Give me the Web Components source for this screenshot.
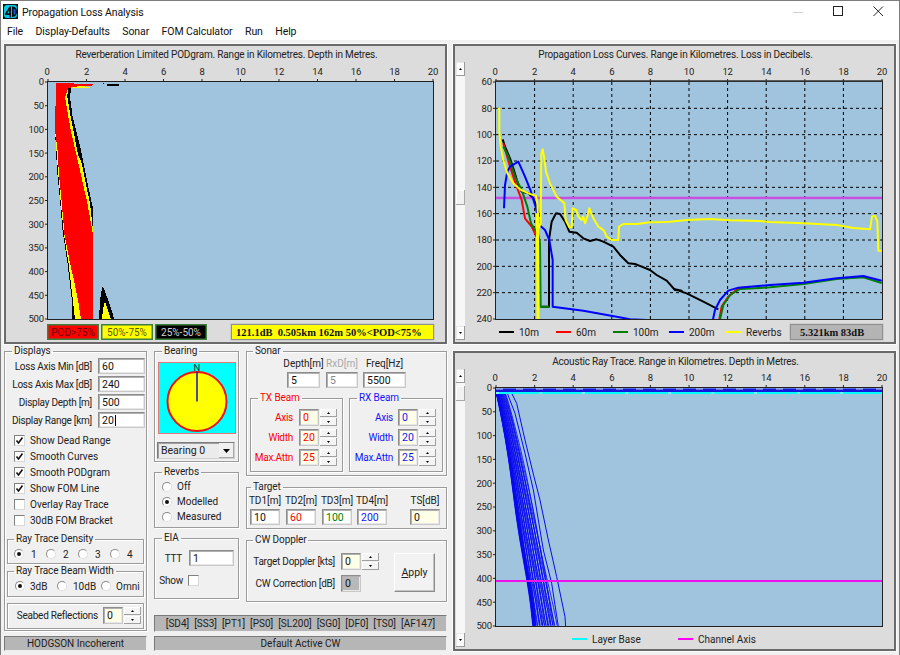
<!DOCTYPE html>
<html lang="en">
<head>
<meta charset="utf-8">
<title>Propagation Loss Analysis</title>
<style>
html,body{margin:0;padding:0;background:#f0f0f0;}
</style>
</head>
<body>
<win-app>
  <plot-panel kind="pod" heading="Reverberation Limited PODgram. Range in Kilometres. Depth in Metres.">
    <pod-key slot="legend" bg="#ff0000" fg="#6a0000">POD&gt;75%</pod-key>
    <pod-key slot="legend" bg="#ffff00" fg="#5a5a00">50%-75%</pod-key>
    <pod-key slot="legend" bg="#000000" fg="#d0d0d0">25%-50%</pod-key>
    <info-box slot="legend" class="end" bg="#ffff00" w="203" pl="4">121.1dB  0.505km 162m 50%&lt;POD&lt;75%</info-box>
  </plot-panel>
  <plot-panel kind="loss" scroll="114" heading="Propagation Loss Curves. Range in Kilometres. Loss in Decibels.">
    <line-key slot="legend" color="#000000" w="57">10m</line-key>
    <line-key slot="legend" color="#ff0000" w="57">60m</line-key>
    <line-key slot="legend" color="#008000" w="56">100m</line-key>
    <line-key slot="legend" color="#0000ff" w="57">200m</line-key>
    <line-key slot="legend" color="#ffff00" w="57">Reverbs</line-key>
    <info-box slot="legend" class="end" bg="#b4b4b4" w="93" pl="9">5.321km 83dB</info-box>
  </plot-panel>
  <control-deck></control-deck>
  <plot-panel kind="ray" scroll="3" heading="Acoustic Ray Trace. Range in Kilometres. Depth in Metres.">
    <line-key slot="legend" color="#00ffff" w="211" lead="105">Layer Base</line-key>
    <line-key slot="legend" color="#ff00ff" w="100">Channel Axis</line-key>
  </plot-panel>
</win-app>

<script>
const UI = 'Roboto,"Liberation Sans",Arial,sans-serif';
const def = (n, c) => customElements.define(n, c);
const attr = (el, n, d = '') => el.hasAttribute(n) ? el.getAttribute(n) : d;
class Base extends HTMLElement {
  constructor(){ super(); this.attachShadow({mode:'open'}); }
  connectedCallback(){ if(!this._r){ this._r = 1; this.shadowRoot.innerHTML = this.render(); } }
}

/* ---------- window shell ---------- */
def('win-app', class extends Base { render(){ return `
<style>
:host{display:flex;flex-direction:column;box-sizing:border-box;width:900px;height:655px;overflow:hidden;
  border:1px solid #7d7d7d;border-bottom:0;background:#f0f0f0;color:#1a1a1a;font:10px ${UI};}
.title{display:flex;align-items:center;height:21px;background:#fff;flex:none;padding-left:2px;}
.title svg.ic{margin-right:4px;flex:none}
.name{font:10.500px Roboto,sans-serif;letter-spacing:-.1px;color:#111;position:relative;top:1px}
.btns{margin-left:auto;display:flex;padding-right:1px}
.btns span{display:flex;width:40px;height:21px;align-items:center;justify-content:center}
.menu{display:flex;height:18px;background:#fff;flex:none;align-items:center;gap:12.500px;padding-left:6px;
  font:10.500px Roboto,sans-serif;letter-spacing:-.1px;color:#111;}
main{flex:1;display:grid;grid-template-columns:443px 443px;grid-template-rows:300px 300px;column-gap:6px;row-gap:7px;padding:4px 0 0 3px;}
</style>
<div class="title">
  <svg class="ic" width="15" height="15" viewBox="0 0 15 15"><rect width="15" height="15" fill="#06121c"/><rect x="1" y="1" width="13" height="13" rx="3" fill="#08c8e0"/><path d="M6.500 2.500 2 9.500v1.500h4.500v2.500h1.500V2.500z" fill="#06121c"/><path d="M4.300 9.300 6 6.500v2.800z" fill="#08c8e0"/><path d="M9 2.500c4 0 5 2.500 5 5s-1 5.500-5 5.500z" fill="#06121c"/><rect x="10.500" y="5" width="2" height="5.500" rx="1" fill="#1d4fd0"/></svg>
  <span class="name">Propagation Loss Analysis</span>
  <div class="btns">
    <span><svg width="10" height="10"><path d="M0 5.500h10" stroke="#cfcfcf"/></svg></span>
    <span><svg width="11" height="11"><rect x=".5" y=".5" width="9" height="9" fill="none" stroke="#222"/></svg></span>
    <span><svg width="11" height="11"><path d="M.5.500l9.500 9.500M10 .5.500 10" stroke="#222" fill="none"/></svg></span>
  </div>
</div>
<nav class="menu"><span>File</span><span>Display-Defaults</span><span>Sonar</span><span>FOM Calculator</span><span>Run</span><span>Help</span></nav>
<main><slot></slot></main>`; }});

/* ---------- data for the three plots ---------- */
const POD = {
 black:[[56,83],[72,87],[90,88],[71,88.5],[70,97],[72.5,116],[76,130],[81,150],[85,170],[89,190],[92.700,207],[92.700,319],[72.500,319],[71.500,297],[67.500,263],[62.500,230],[60,200],[57,170],[55,130]],
 yellow:[[56,83],[78,85],[90,87.5],[68,88.5],[67.300,97],[70.700,116.700],[73.300,130],[78,155],[81.700,163],[86,185],[90,203],[92.700,228],[92.700,319],[75,319],[72.500,297],[68.500,263],[64,235],[60.500,200],[57.500,165],[55,130]],
 red:[[56,83],[92.700,84],[92,86.500],[80,86],[68.300,88],[65,97],[68.300,116.700],[70.700,130],[78.300,163],[87.300,203],[92.700,233],[92.700,319],[81,319],[78,300],[75,285],[70,263],[64.500,235],[61.500,200],[59,175],[57.500,150],[55,130]],
 lobeK:[[102.300,286.700],[104,288],[106,295],[108.300,300],[112,311],[114,319],[99.300,319],[99.500,310],[100,300]],
 lobeY:[[105,301],[107,308],[111,319],[102,319],[103,309]],
};
const R = 660; /* right-hand crop offset of the reading grid */
const LOSS = [
 ['#000',[[158,298],[165,320],[180,355],[190,385],[205,435],[215,455],[235,460],[250,475],[260,500],[268,530]]],
 ['#000',[[272,800],[297,800],[297,600],[305,545],[318,520],[330,522],[345,545],[358,575],[380,578],[400,595],[420,603],[440,598],[460,605],[490,620],[510,645],[535,670],[555,672],[575,680],[600,690],[620,705],[650,722],[675,750],[695,752],[R+15,748],[R+50,760],[R+100,785],[R+145,808]]],
 ['#f00',[[160,310],[180,380],[200,440],[215,480],[225,535],[245,560],[262,595]]],
 ['#f00',[[R+148,838],[R+155,800],[R+175,770],[R+205,745],[R+240,740]]],
 ['#008000',[[160,320],[175,350],[195,410],[215,450],[232,500],[243,550],[265,585],[270,610],[272,800],[297,800]]],
 ['#008000',[[R+150,838],[R+160,795],[R+180,765],[R+210,747],[R+300,742],[R+400,732],[R+500,717],[R+580,712],[R+635,729]]],
 ['#00f',[[162,505],[165,435],[172,395],[180,380],[205,365],[225,410],[243,455],[258,505],[268,555],[285,570],[298,600],[308,660],[308,800],[400,812],[500,830],[540,838],[640,842]]],
 ['#00f',[[R+129,838],[R+135,810],[R+150,780],[R+175,752],[R+205,743],[R+300,735],[R+400,728],[R+500,715],[R+580,708],[R+635,722]]],
 ['#ff0',[[143,205],[148,207],[148,280],[152,320],[160,360],[172,400],[190,430],[210,448],[235,460],[258,468],[262,490],[266,565],[272,550],[274,340],[278,328],[282,350],[288,395],[300,430],[320,470],[343,490],[347,540],[358,562],[365,562],[368,505],[378,510],[385,530],[395,540],[400,530],[405,550],[412,530],[418,505],[430,535],[445,560],[462,572],[470,590],[485,600],[505,600],[507,560],[520,552],[560,552],[600,547],[640,546],[R,545],[R+50,540],[R+120,537],[R+180,541],[R+270,543],[R+300,546],[R+400,550],[R+500,555],[R+550,564],[R+600,568],[R+606,530],[R+615,527],[R+622,545],[R+625,632],[R+635,632]]],
 ['#ff0',[[262,520],[264,838]],9],
];
const poly = pts => pts.map(p => p.join(',')).join(' ');

function axes(px, py, pw, ph, yVals, opts = {}) {
  let out = '';
  const xs = [0,2,4,6,8,10,12,14,16,18,20];
  xs.forEach(k => { const x = px + k * pw / 20;
    out += `<path d="M${x} ${py-3}V${py}" stroke="#222"/><text x="${x - (k===0?1:0)}" y="${py-7}" text-anchor="middle">${k}</text>`;
    if(opts.grid && k>0 && k<20) out += `<path d="M${x} ${py}V${py+ph}" stroke="#000" stroke-dasharray="3 3"/>`;
  });
  const n = yVals.length - 1;
  yVals.forEach((v,i) => { const y = py + i * ph / n;
    out += `<path d="M${px-3} ${y}H${px}" stroke="#222"/><text x="${px-4}" y="${y+3.400}" text-anchor="end">${v}</text>`;
    if(opts.grid && i>0 && i<n) out += `<path d="M${px} ${y}H${px+pw}" stroke="#000" stroke-dasharray="3 3"/>`;
  });
  return out;
}

function podPlot(){
  const P = POD, px = 30, py = 20, pw = 385, ph = 237;
  const ys = []; for(let v=0;v<=500;v+=50) ys.push(v);
  return `<svg width="429" height="260"><rect x="${px}" y="${py}" width="${pw}" height="${ph}" fill="#a0c4de"/>
  <g transform="translate(-18,-62)" shape-rendering="crispEdges">
   <polygon points="${poly(P.black)}" fill="#000"/><polygon points="${poly(P.yellow)}" fill="#ff0"/><polygon points="${poly(P.red)}" fill="#f00"/>
   <polygon points="${poly(P.lobeK)}" fill="#000"/><polygon points="${poly(P.lobeY)}" fill="#ff0"/>
   <rect x="107" y="84" width="12" height="1.500" fill="#000"/><rect x="103" y="82.500" width="1" height="1" fill="#000"/>
  </g>
  <rect x="${px-.5}" y="${py-.5}" width="${pw+1}" height="${ph+1}" fill="none" stroke="#222"/>
  ${axes(px,py,pw,ph,ys)}</svg>`;
}
function lossPlot(){
  const px = 29, py = 20, pw = 386, ph = 237;
  const ys = []; for(let v=60;v<=240;v+=20) ys.push(v);
  return `<svg width="429" height="260"><defs><clipPath id="c"><rect x="${px}" y="${py}" width="${pw}" height="${ph}"/></clipPath></defs>
  <rect x="${px}" y="${py}" width="${pw}" height="${ph}" fill="#a0c4de"/>
  ${axes(px,py,pw,ph,ys,{grid:true})}
  <g clip-path="url(#c)">
    <rect x="${px}" y="134.700" width="${pw}" height="2.500" fill="#c850e0"/>
    <g transform="translate(-17,-22) scale(.33333)" fill="none" stroke-linejoin="round">
    ${LOSS.map(([c,p,w]) => `<polyline points="${poly(p)}" stroke="${c}" stroke-width="${w||6}"/>`).join('')}
    </g>
  </g>
  <rect x="${px-.5}" y="${py-.5}" width="${pw+1}" height="${ph+1}" fill="none" stroke="#222"/>
  <path d="M${px-1} ${py-1}H${px+pw+1}" stroke="#333" stroke-width="1.500"/>
  </svg>`;
}
function rayPath(x0, xb, i, y0 = 125, pow = .85){
  const pts = [];
  for(let y = y0; y <= 830; y += 18){
    const f = (y-y0)/(830-y0);
    const wig = 4 * f * Math.sin(f * 9 + i * 1.9);
    pts.push([ +(x0 + (xb-x0) * Math.pow(f, pow) + wig).toFixed(1), y ]);
  }
  return pts;
}
function rayPlot(){
  const px = 29, py = 19, pw = 386, ph = 238;
  const ys = []; for(let v=0;v<=500;v+=50) ys.push(v);
  let rays = '';
  const N = 27;
  for(let i=0;i<N;i++){ const t = i/(N-1);
    const xb = 252 + 66 * t, x0 = 138 + 26 * t * t;
    rays += `<polyline points="${poly(rayPath(x0,xb,i))}"/>`;
  }
  for(let i=0;i<8;i++){
    rays += `<polyline points="${poly(rayPath(138+i*.5,248+i*1.2,0,125,.85).map(p=>[p[0]-1,p[1]]))}" stroke-width="3.500"/>`;
  }
  const lone = [[185,130],[200,160],[225,270],[252,380],[270,450],[295,570],[320,680],[345,800],[347,830]];
  const lone2 = [[172,130],[195,190],[225,310],[250,420],[280,600],[305,700],[325,830]];
  return `<svg width="429" height="260"><defs><clipPath id="c"><rect x="${px}" y="${py}" width="${pw}" height="${ph}"/></clipPath></defs>
  <rect x="${px}" y="${py}" width="${pw}" height="${ph}" fill="#a0c4de"/>
  <g clip-path="url(#c)">
    <g transform="translate(-17,-19) scale(.33333)" fill="none" stroke="#0a0aee" stroke-width="2.500">${rays}
      <polyline points="${poly(lone)}" stroke-width="3"/><polyline points="${poly(lone2)}" stroke-width="3"/></g>
    <rect x="${px}" y="${py+.5}" width="${pw}" height="3.500" fill="#1616dd"/>
    <path d="M${px} ${py+1}H${px+pw}" stroke="#c9d6ec" stroke-width="1" stroke-dasharray="7 13"/>
    <path d="M${px} ${py+5}H${px+pw}" stroke="#00ffff" stroke-width="2"/>
    <path d="M${px} ${py+5}H${px+pw}" stroke="#d8ffff" stroke-width="1" stroke-dasharray="3 40"/>
    <rect x="${px}" y="211" width="${pw}" height="2" fill="#f010ee"/>
  </g>
  <rect x="${px-.5}" y="${py-.5}" width="${pw+1}" height="${ph+1}" fill="none" stroke="#222"/>
  ${axes(px,py,pw,ph,ys)}</svg>`;
}

def('plot-panel', class extends Base { render(){
  const kind = attr(this,'kind');
  const sc = this.hasAttribute('scroll');
  const plot = kind==='pod' ? podPlot() : kind==='loss' ? lossPlot() : rayPlot();
  const lead = kind==='pod' ? 29 : kind==='loss' ? 32 : 0;
  return `<style>
:host{display:block;box-sizing:border-box;width:443px;height:300px;border:2px solid #6a6a6a;background:#dcdcdc;box-shadow:0 0 0 1px #fbfbfb;}
.wrap{display:grid;grid-template-columns:12px 1fr;grid-template-rows:16px 260px 20px;height:100%}
.head{grid-column:1/3;text-align:center;font:10px ${UI};letter-spacing:-.18px;color:#222;line-height:17px;white-space:nowrap;}
.sb{grid-row:2/4;padding:0 0 0 1px;display:flex}
.plot{line-height:0}
svg{display:block;overflow:visible;font:9.500px ${UI};letter-spacing:-.15px;fill:#222}
.leg{display:flex;align-items:center;padding-left:${lead}px;padding-right:13px}
::slotted(.end){margin-left:auto}
</style>
<div class="wrap"><div class="head">${attr(this,'heading')}</div>
<div class="sb">${sc?`<win-scroll thumb="${attr(this,'scroll')}"></win-scroll>`:''}</div>
<div class="plot">${plot}</div>
<div class="leg"><slot name="legend"></slot></div></div>`; }});

def('win-scroll', class extends Base { render(){ return `<style>
:host{display:flex;flex-direction:column;width:9px;height:278px;background:#f7f7f7}
.b{flex:none;height:14px;background:#fcfcfc;box-shadow:inset -1px -1px 0 #9a9a9a, inset 1px 1px 0 #e8e8e8;display:flex;align-items:center;justify-content:center}
.t{flex:1;padding-top:${attr(this,'thumb')}px;box-sizing:border-box}
.th{height:15px;background:#f2f2f2;box-shadow:inset -1px -1px 0 #a8a8a8, inset 1px 1px 0 #fff;}
</style><div class="b"><svg width="3" height="2"><path d="M1.500 0 3 2H0z"/></svg></div><div class="t"><div class="th"></div></div><div class="b"><svg width="3" height="2"><path d="M0 0h3L1.500 2z"/></svg></div>`; }});

def('pod-key', class extends Base { render(){ return `<style>
:host{display:flex;box-sizing:border-box;width:52px;height:16px;margin-right:2px;align-items:center;justify-content:center;
 background:${attr(this,'bg')};color:${attr(this,'fg')};border:1px solid #3d7f3d;box-shadow:inset 0 0 0 .5px #3d7f3d;font:10px ${UI};white-space:nowrap;}
</style><slot></slot>`; }});
def('info-box', class extends Base { render(){ return `<style>
:host{display:flex;box-sizing:border-box;width:${attr(this,'w')}px;height:16px;align-items:center;padding-left:${attr(this,'pl','4')}px;
 background:${attr(this,'bg')};border:1px solid #909090;box-shadow:0 0 0 .5px #bcbcbc;
 font:bold 10.500px "Liberation Serif",serif;color:#111;white-space:pre;}
</style><slot></slot>`; }});
def('line-key', class extends Base { render(){ return `<style>
:host{display:flex;box-sizing:border-box;width:${attr(this,'w')}px;padding-left:${attr(this,'lead','0')}px;align-items:center;gap:5px;font:10px ${UI};color:#222;white-space:nowrap;flex:none}
i{display:block;width:15px;height:2px;background:${attr(this,'color')};flex:none}
</style><i></i><slot></slot>`; }});

/* ---------- small form controls ---------- */
def('win-field', class extends Base { render(){
  const caret = this.hasAttribute('caret');
  return `<style>
:host{display:flex;box-sizing:border-box;flex:none;width:${attr(this,'w','30')}px;height:${attr(this,'h','16')}px;align-items:center;padding-left:3px;
 background:${attr(this,'bg','#fff')};color:${attr(this,'fg','#111')};font:10.500px ${UI};
 border:1px solid;border-color:#8d8d8d #c8c8c8 #c8c8c8 #8d8d8d;box-shadow:inset 1px 1px 0 #b0b0b0,inset -1px -1px 0 #e8e8e8;}
b{display:inline-block;width:1px;height:11px;background:#000;margin-left:1px}
</style><slot></slot>${caret?'<b></b>':''}`; }});

def('win-spin', class extends Base { render(){
  const bg = attr(this,'bg','#ffffe8'), fg = attr(this,'fg','#111');
  return `<style>
:host{display:flex;flex:none;height:17px}
.s{display:flex;flex-direction:column;width:17px;margin-left:1px;gap:1px}
.s span{flex:1;background:#f4f4f4;box-shadow:inset -1px -1px 0 #a0a0a0,inset 1px 1px 0 #fff;display:flex;align-items:center;justify-content:center}
</style><win-field w="20" h="17" bg="${bg}" fg="${fg}">${attr(this,'value')}</win-field>
<div class="s"><span><svg width="3" height="2"><path d="M1.500 0 3 2H0z"/></svg></span><span><svg width="3" height="2"><path d="M0 0h3L1.500 2z"/></svg></span></div>`; }});

def('win-check', class extends Base { render(){
  const c = this.hasAttribute('checked');
  return `<style>
:host{display:flex;align-items:center;gap:5px;height:16px;padding-left:${attr(this,'lead','9')}px;color:#222;white-space:nowrap;font:10px ${UI}}
.b{box-sizing:border-box;width:11px;height:11px;background:#fff;border:1px solid;border-color:#808080 #d8d8d8 #d8d8d8 #808080;flex:none;line-height:0}
</style><div class="b">${c?'<svg width="9" height="9"><path d="M1.500 4.500 3.500 7 7.500 1.500" fill="none" stroke="#111" stroke-width="1.600"/></svg>':''}</div><slot></slot>`; }});

def('win-radio', class extends Base { render(){
  const c = this.hasAttribute('checked');
  return `<style>
:host{display:flex;align-items:center;gap:${attr(this,'gap','5')}px;height:${attr(this,'h','15')}px;width:${attr(this,'w','auto')}${attr(this,'w')?'px':''};color:#222;white-space:nowrap;flex:none;font:10px ${UI}}
.b{box-sizing:border-box;width:10px;height:10px;border-radius:50%;background:#fff;border:1px solid;border-color:#8a8a8a #e0e0e0 #e0e0e0 #8a8a8a;display:flex;align-items:center;justify-content:center;flex:none}
.b i{width:4px;height:4px;border-radius:50%;background:#111}
</style><div class="b">${c?'<i></i>':''}</div><slot></slot>`; }});

def('group-box', class extends Base { render(){
  const h = attr(this,'h'), t = attr(this,'heading');
  return `<style>
:host{display:block;box-sizing:border-box;flex:none;height:${h}px;${attr(this,'w')?`width:${attr(this,'w')}px;`:''}margin:${attr(this,'m','0')};color:${attr(this,'fg','#222')}}
fieldset{box-sizing:border-box;height:100%;margin:0;padding:0;min-width:0;border:1px solid #9b9b9b;box-shadow:1px 1px 0 #fff,inset 1px 1px 0 #fff;}
legend{padding:0 2px;margin-left:${attr(this,'lm','7')}px;font:10px/12px ${UI};letter-spacing:-.1px;color:${attr(this,'fg','#222')};}
.c{display:flex;flex-direction:${attr(this,'dir','column')};padding:${attr(this,'pad','0')};${attr(this,'gap')?`gap:${attr(this,'gap')}px;`:''}align-items:${attr(this,'ai','stretch')};box-sizing:border-box;${t?'':'height:100%;'}}
</style><fieldset>${t?`<legend>${t}</legend>`:''}<div class="c"><slot></slot></div></fieldset>`; }});

def('label-row', class extends Base { render(){ return `<style>
:host{display:flex;align-items:center;gap:${attr(this,'gap','6')}px;margin:${attr(this,'m','0')};padding:${attr(this,'pad','0')};color:${attr(this,'fg','#222')};font:10.500px ${UI}}
.l{width:${attr(this,'lw','40')}px;text-align:right;white-space:nowrap;flex:none;font:10px ${UI};letter-spacing:-.25px;color:inherit}
</style><div class="l">${attr(this,'label')}</div><slot></slot>`; }});

def('top-label', class extends Base { render(){ return `<style>
:host{display:flex;flex-direction:column;align-items:center;gap:${attr(this,'gap','2')}px;flex:none;width:${attr(this,'w','30')}px;margin:${attr(this,'m','0')};}
.l{height:12px;line-height:12px;white-space:nowrap;font:10px/12px ${UI};color:${attr(this,'fg','#222')}}
</style><div class="l">${attr(this,'label')}</div><slot></slot>`; }});

def('flow-row', class extends Base { render(){ return `<style>
:host{display:flex;align-items:${attr(this,'ai','flex-start')};gap:${attr(this,'gap','0')}px;padding:${attr(this,'pad','0')};margin:${attr(this,'m','0')}}
</style><slot></slot>`; }});

def('status-bar', class extends Base { render(){ return `<style>
:host{display:flex;box-sizing:border-box;height:${attr(this,'h','15')}px;align-items:center;justify-content:center;background:#b6b6b6;color:#1c1c1c;font:10px ${UI};white-space:pre;flex:none;
 border:1px solid;border-color:#7a7a7a #eee #eee #7a7a7a;margin:${attr(this,'m','0')}}
</style><slot></slot>`; }});

def('win-combo', class extends Base { render(){ return `<style>
:host{display:flex;box-sizing:border-box;width:78px;height:17px;flex:none;margin:8px 0 0 2px;align-items:center;padding-left:3px;background:#ebebeb;border:1px solid;border-color:#7c7c7c #d0d0d0 #d0d0d0 #7c7c7c;box-shadow:inset 1px 1px 0 #a0a0a0;font:10.500px ${UI};color:#222}
.d{margin-left:auto;width:15px;height:100%;background:#f0f0f0;box-shadow:inset -1px -1px 0 #a8a8a8;display:flex;align-items:center;justify-content:center}
</style><slot></slot><div class="d"><svg width="7" height="4"><path d="M0 0h7L3.500 4z" fill="#000"/></svg></div>`; }});

def('bearing-dial', class extends Base { render(){ return `<style>
:host{display:block;flex:none;width:78px;height:72px;margin:5px 0 0 3px;line-height:0}
text{font:9.500px ${UI};fill:#103030}
</style><svg width="78" height="72"><rect x=".5" y=".5" width="77" height="71" fill="#00ffff" stroke="#e07878"/>
<circle cx="39" cy="39.500" r="29.500" fill="#ffff00" stroke="#ee1111" stroke-width="2"/>
<path d="M39 39.500V10" stroke="#1010cc" stroke-width="1.500"/><text x="39" y="9" text-anchor="middle">N</text></svg>`; }});

def('apply-button', class extends Base { render(){ return `<style>
:host{display:flex;box-sizing:border-box;width:41px;height:39px;align-items:center;justify-content:center;flex:none;background:#f2f2f2;font:10.500px ${UI};color:#222;margin-left:15px;
 border:1px solid;border-color:#fff #8c8c8c #8c8c8c #fff;box-shadow:inset -1px -1px 0 #c4c4c4;}
u{text-underline-offset:1px}
</style><span><u>A</u>pply</span>`; }});

/* ---------- the control deck ---------- */
def('control-deck', class extends Base { render(){
 const beam = (h, fg, lw, gap) => `
 <group-box heading="${h}" fg="${fg}" h="80" w="${lw===42?93:94}" lm="7" pad="5px 0 0 0" gap="3">
   <label-row label="Axis" fg="${fg}" lw="${lw}" gap="${gap}"><win-spin value="0" fg="${fg}"></win-spin></label-row>
   <label-row label="Width" fg="${fg}" lw="${lw}" gap="${gap}"><win-spin value="20" fg="${fg}"></win-spin></label-row>
   <label-row label="Max.Attn" fg="${fg}" lw="${lw}" gap="${gap}"><win-spin value="25" fg="${fg}"></win-spin></label-row>
 </group-box>`;
 return `<style>
:host{display:grid;grid-template-columns:143px 293px;column-gap:7px;margin-top:-6px;height:306px;color:#222;font:10px ${UI}}
.col{display:flex;flex-direction:column}
.mid{display:flex;gap:7px}
.mid .a{display:flex;flex-direction:column;gap:4px;width:85px}
.mid .b{display:flex;flex-direction:column;gap:5px;width:201px}
.bars{margin-top:auto;display:flex;flex-direction:column;gap:4px}
</style>
<div class="col">
 <group-box heading="Displays" h="286" lm="7">
   <label-row label="Loss Axis Min [dB]" lw="87" m="1px 0 0"><win-field w="47">60</win-field></label-row>
   <label-row label="Loss Axis Max [dB]" lw="87" m="2px 0 0"><win-field w="47">240</win-field></label-row>
   <label-row label="Display Depth [m]" lw="87" m="2px 0 0"><win-field w="47">500</win-field></label-row>
   <label-row label="Display Range [km]" lw="87" m="2px 0 0"><win-field w="47" caret>20</win-field></label-row>
   <flow-row m="4px 0 0"><win-check checked>Show Dead Range</win-check></flow-row>
   <win-check checked>Smooth Curves</win-check>
   <win-check checked>Smooth PODgram</win-check>
   <win-check checked>Show FOM Line</win-check>
   <win-check>Overlay Ray Trace</win-check>
   <win-check>30dB FOM Bracket</win-check>
   <group-box heading="Ray Trace Density" h="31" m="5px 2px 0" lm="6">
     <flow-row pad="1px 0 0 6px" ai="center">
       <win-radio checked w="32" gap="7" h="16">1</win-radio><win-radio w="32" gap="7" h="16">2</win-radio><win-radio w="32" gap="7" h="16">3</win-radio><win-radio w="32" gap="7" h="16">4</win-radio>
     </flow-row>
   </group-box>
   <group-box heading="Ray Trace Beam Width" h="32" m="1px 2px 0" lm="6">
     <flow-row pad="1px 0 0 7px" ai="center">
       <win-radio checked w="42" h="16">3dB</win-radio><win-radio w="44" h="16" gap="6">10dB</win-radio><win-radio h="16" gap="5">Omni</win-radio>
     </flow-row>
   </group-box>
   <group-box h="26" m="6px 2px 0">
     <label-row label="Seabed Reflections" lw="90" gap="5" pad="3px 0 0"><win-spin value="0"></win-spin></label-row>
   </group-box>
 </group-box>
 <status-bar h="15" m="5px 0 0">HODGSON Incoherent</status-bar>
</div>
<div class="col">
 <div class="mid">
  <div class="a">
   <group-box heading="Bearing" h="117" lm="7"><bearing-dial></bearing-dial><win-combo>Bearing 0</win-combo></group-box>
   <group-box heading="Reverbs" h="62" lm="7" pad="1px 0 0 7px">
     <win-radio>Off</win-radio><win-radio checked>Modelled</win-radio><win-radio>Measured</win-radio>
   </group-box>
   <group-box heading="EIA" h="67" lm="7" pad="6px 0 0 0">
     <label-row label="TTT" lw="27" gap="7"><win-field w="45">1</win-field></label-row>
     <label-row label="Show" lw="28" gap="5" m="6px 0 0"><win-check lead="0"></win-check></label-row>
   </group-box>
  </div>
  <div class="b">
   <group-box heading="Sonar" h="131" lm="6">
     <flow-row pad="1px 0 0 40px" gap="6">
       <top-label label="Depth[m]" w="33"><win-field w="33">5</win-field></top-label>
       <top-label label="RxD[m]" w="32" fg="#a8a8a8"><win-field w="32" fg="#888">5</win-field></top-label>
       <top-label label="Freq[Hz]" w="43" m="0 0 0 -1px"><win-field w="43">5500</win-field></top-label>
     </flow-row>
     <flow-row pad="4px 0 0 3px" gap="6">${beam('TX Beam','#ff0000',42,6)}${beam('RX Beam','#1414ff',43,5)}</flow-row>
   </group-box>
   <group-box heading="Target" h="48" lm="4">
     <flow-row pad="2px 0 0 3px">
       <top-label label="TD1[m]"><win-field>10</win-field></top-label>
       <top-label label="TD2[m]" m="0 0 0 6px"><win-field fg="#ff0000">60</win-field></top-label>
       <top-label label="TD3[m]" m="0 0 0 6px"><win-field fg="#008000">100</win-field></top-label>
       <top-label label="TD4[m]" m="0 0 0 5px"><win-field fg="#1414ff">200</win-field></top-label>
       <top-label label="TS[dB]" m="0 0 0 23px"><win-field bg="#ffffe8">0</win-field></top-label>
     </flow-row>
   </group-box>
   <group-box heading="CW Doppler" h="68" lm="6">
     <flow-row pad="7px 0 0 0">
       <div class="col" style="gap:5px">
         <label-row label="Target Doppler [kts]" lw="88"><win-spin value="0"></win-spin></label-row>
         <label-row label="CW Correction [dB]" lw="88"><win-field w="20" h="17" bg="#b8b8b8">0</win-field></label-row>
       </div>
       <apply-button></apply-button>
     </flow-row>
   </group-box>
  </div>
 </div>
 <div class="bars">
  <status-bar h="17">[SD4]  [SS3]  [PT1]  [PS0]  [SL200]  [SG0]  [DF0]  [TS0]  [AF147]</status-bar>
  <status-bar h="15">Default Active CW</status-bar>
 </div>
</div>`; }});
</script>
</body>
</html>
